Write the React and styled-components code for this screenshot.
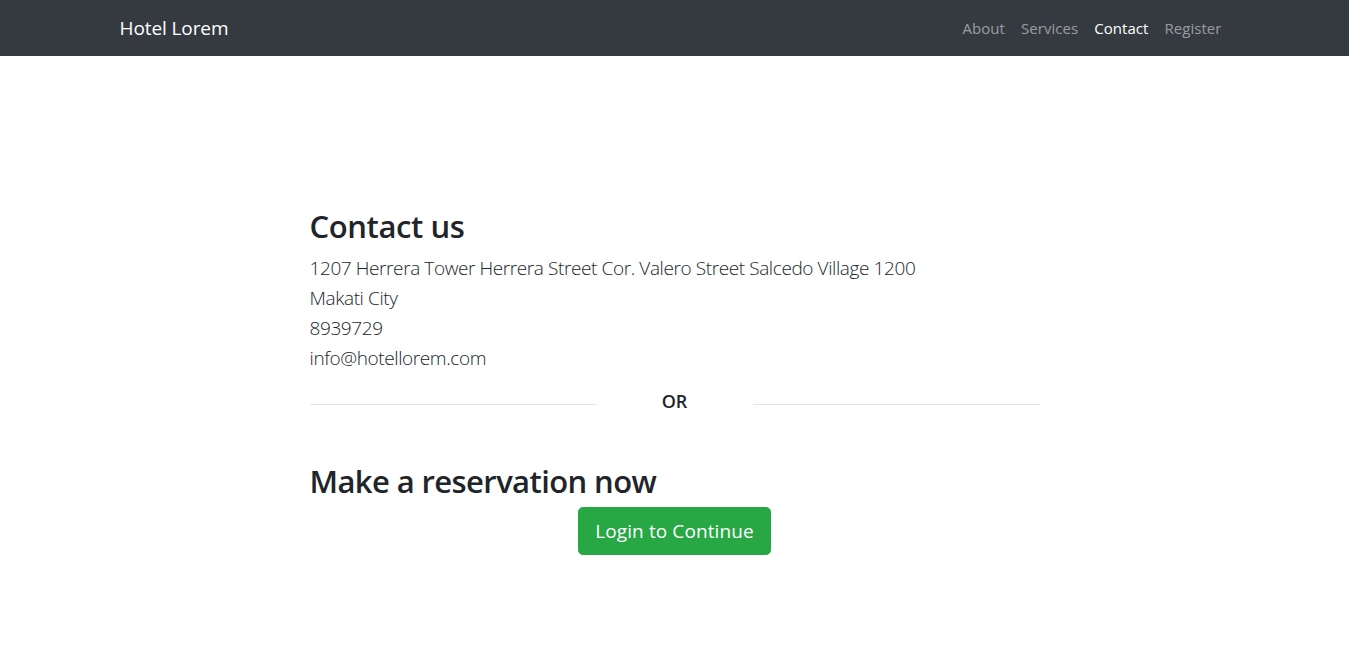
import React from "react";
import styled, { createGlobalStyle } from "styled-components";

const GlobalStyle = createGlobalStyle`
  * { box-sizing: border-box; }
  body {
    margin: 0;
    font-family: "Open Sans", "Noto Sans", "Liberation Sans", sans-serif;
    font-size: 16px;
    line-height: 1.5;
    color: #212529;
    background: #fff;
  }
`;

const Navbar = styled.nav`
  background-color: #343a40;
  height: 56px;
  display: flex;
  align-items: center;
`;

const Container = styled.div`
  width: 100%;
  max-width: 1140px;
  margin: 0 auto;
  padding: 0 15px;
`;

const NavInner = styled(Container)`
  display: flex;
  align-items: center;
  justify-content: space-between;
`;

const Brand = styled.a`
  color: #fff;
  font-size: 19px;
  letter-spacing: -0.1px;
  text-decoration: none;
  line-height: 30px;
`;

const NavList = styled.ul`
  display: flex;
  list-style: none;
  margin: 0;
  padding: 0;
`;

const NavLink = styled.a`
  display: block;
  padding: 8px;
  font-size: 15px;
  letter-spacing: 0.05px;
  text-decoration: none;
  color: ${(p) => (p.$active ? "#fff" : "rgba(255,255,255,.5)")};
`;

const Main = styled(Container)`
  padding-top: 152px;
  padding-bottom: 60px;
`;

const Column = styled.div`
  width: 730px;
  margin: 0 auto;
`;

const Heading = styled.h2`
  font-size: 31px;
  font-weight: 600;
  letter-spacing: ${(p) => p.$spacing || "-0.4px"};
  line-height: 1.2;
  margin: ${(p) => p.$margin || "0 0 8px"};
`;

const Lead = styled.p`
  font-size: 19px;
  font-weight: 300;
  letter-spacing: -0.4px;
  line-height: 30px;
  margin: 0 0 16px;
`;

const OrRow = styled.div`
  display: grid;
  grid-template-columns: 287px 1fr 287px;
  column-gap: 15px;
  align-items: start;
`;

const Rule = styled.hr`
  border: 0;
  border-top: 1px solid rgba(0, 0, 0, 0.1);
  margin: 15px 0 16px;
`;

const OrText = styled.h5`
  margin: 0 0 8px;
  text-align: center;
  font-size: 18px;
  font-weight: 600;
  line-height: 24px;
`;

const ButtonRow = styled.div`
  text-align: center;
`;

const Button = styled.button`
  font-family: inherit;
  font-size: 19px;
  letter-spacing: 0.1px;
  line-height: 30px;
  padding: 8px 10px;
  color: #fff;
  background-color: #28a745;
  border: 1px solid #28a745;
  border-radius: 4.8px;
  width: 193px;
  cursor: pointer;
`;

const links = [
  { label: "About" },
  { label: "Services" },
  { label: "Contact", active: true },
  { label: "Register" },
];

export default function App() {
  return (
    <>
      <GlobalStyle />
      <Navbar>
        <NavInner>
          <Brand href="#">Hotel Lorem</Brand>
          <NavList>
            {links.map((l) => (
              <li key={l.label}>
                <NavLink href="#" $active={l.active}>{l.label}</NavLink>
              </li>
            ))}
          </NavList>
        </NavInner>
      </Navbar>
      <Main>
        <Column>
          <Heading>Contact us</Heading>
          <Lead>
            1207 Herrera Tower Herrera Street Cor. Valero Street Salcedo Village 1200
            <br />
            Makati City
            <br />
            8939729
            <br />
            info@hotellorem.com
          </Lead>
          <OrRow>
            <Rule />
            <OrText>OR</OrText>
            <Rule />
          </OrRow>
          <Heading $margin="42px 0 7px" $spacing="-0.6px">Make a reservation now</Heading>
          <ButtonRow>
            <Button>Login to Continue</Button>
          </ButtonRow>
        </Column>
      </Main>
    </>
  );
}
